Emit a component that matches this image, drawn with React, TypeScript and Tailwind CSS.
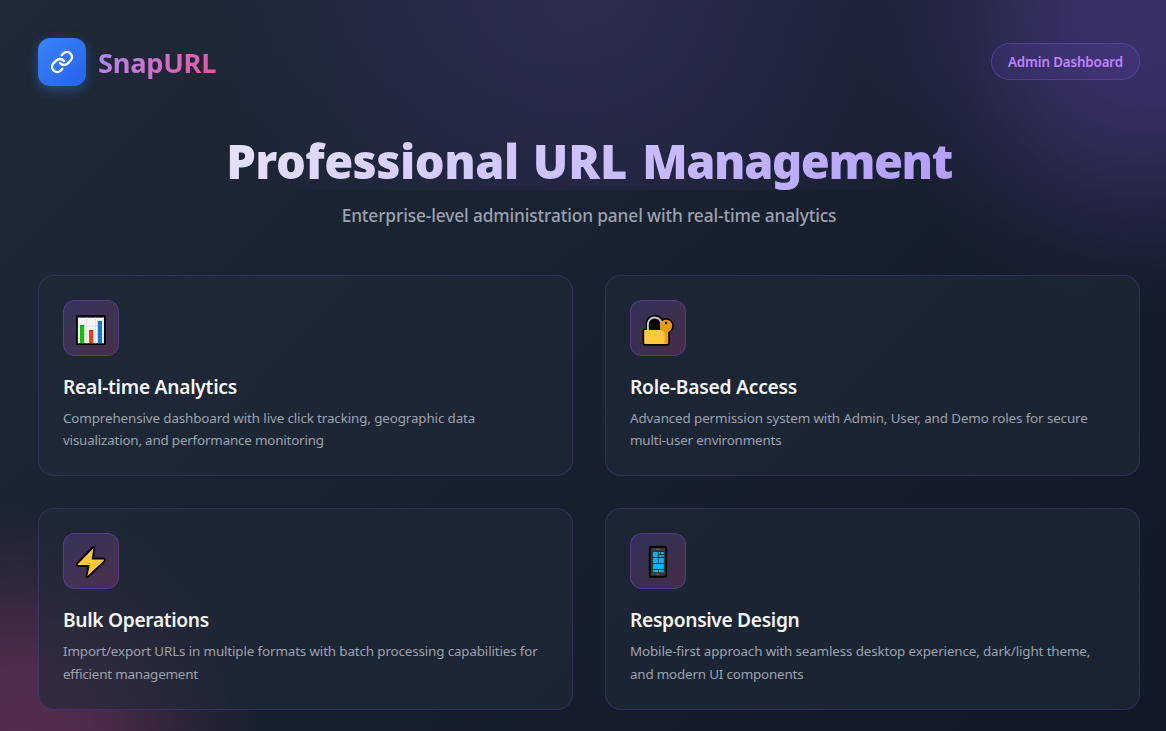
import type { ReactNode } from 'react';
import { Link } from 'lucide-react';

function ChartIcon() {
  return (
    <svg viewBox="0 0 56 56" className="size-full">
      <rect x="13" y="15.2" width="29.8" height="29.8" rx="0.8" fill="#050505" />
      <rect x="15" y="17.6" width="26" height="25.6" fill="#f3f3f3" />
      <path d="M15.3 17.6v25.6M23.7 17.6v25.6M32.5 17.6v25.6M40.5 17.6v25.6M15 26h26M15 34.4h26" stroke="#dedede" strokeWidth="0.8" />
      <rect x="17" y="25" width="4.2" height="18.2" fill="#16b916" />
      <rect x="26" y="30" width="4.2" height="13.2" fill="#f03a17" />
      <rect x="34.8" y="21" width="4.2" height="22.2" fill="#0f7bd8" />
      <path d="M17 25.4h4.2" stroke="#0c8f10" strokeWidth="0.8" />
      <path d="M26 30.4h4.2" stroke="#c92c0e" strokeWidth="0.8" />
      <path d="M34.8 21.4h4.2" stroke="#0b5ea8" strokeWidth="0.8" />
    </svg>
  );
}

function LockIcon() {
  return (
    <svg viewBox="0 0 56 56" className="size-full">
      <g fill="#050505">
        <rect x="12.5" y="28.6" width="27.4" height="17.2" rx="2" />
        <rect x="15.6" y="14.6" width="18.4" height="20" rx="9.2" />
        <circle cx="36" cy="26" r="7.9" />
      </g>
      <path d="M17.9 30.5v-6.3a6.8 6.8 0 0 1 13.6 0v6.3" fill="none" stroke="#c9c9c9" strokeWidth="2" />
      <rect x="14.2" y="30" width="23.6" height="14" rx="1" fill="#ffc83d" />
      <rect x="34.2" y="29" width="4" height="14.6" rx="0.8" fill="#e9a013" />
      <path d="M34.8 33v9" stroke="#ffc83d" strokeWidth="0.8" />
      <circle cx="36" cy="26" r="6.2" fill="#eb9d00" />
      <circle cx="36" cy="23" r="1.2" fill="#050505" />
    </svg>
  );
}

function BoltIcon() {
  return (
    <svg viewBox="0 0 56 56" className="size-full">
      <path
        d="M30.4 15.2 15.2 30.8c-.4.5-.1 1.1.5 1.1h11.1l-2.4 11.2 16.3-15.4c.5-.5.2-1.1-.4-1.1H28.7z"
        fill="#ffc83d" stroke="#050505" strokeWidth="4" strokeLinejoin="round" paintOrder="stroke"
      />
    </svg>
  );
}

function PhoneIcon() {
  return (
    <svg viewBox="0 0 56 56" className="size-full">
      <rect x="18.8" y="12.8" width="18.4" height="32" rx="2.2" fill="#050505" />
      <rect x="20.8" y="15" width="14.6" height="27.8" rx="0.8" fill="#3b3a39" />
      <path d="M26 16.3h4.4M26.7 41.4h2.2" stroke="#767676" strokeWidth="0.8" />
      <rect x="22.4" y="18.2" width="11.8" height="21.4" fill="#123243" />
      <g fill="#00b7f1">
        <rect x="22.9" y="19" width="5" height="5" />
        <rect x="28.8" y="19" width="1.6" height="2" />
        <rect x="31" y="19" width="2.8" height="2" />
        <rect x="28.8" y="22" width="2.8" height="2" />
        <rect x="32.2" y="22" width="1.6" height="2" />
        <rect x="22.9" y="25" width="5" height="5" />
        <rect x="28.8" y="25" width="5" height="5" />
        <rect x="22.9" y="31" width="10.9" height="5" />
        <rect x="22.9" y="37" width="5" height="2.2" />
        <rect x="28.8" y="37" width="5" height="2.2" />
      </g>
    </svg>
  );
}

type Line = { text: string; tracking: string };
type Feature = { icon: ReactNode; title: Line; lines: Line[] };

const features: Feature[] = [
  {
    icon: <ChartIcon />,
    title: { text: 'Real-time Analytics', tracking: 'tracking-[-0.26px]' },
    lines: [
      { text: 'Comprehensive dashboard with live click tracking, geographic data', tracking: 'tracking-[-0.12px]' },
      { text: 'visualization, and performance monitoring', tracking: 'tracking-[-0.187px]' },
    ],
  },
  {
    icon: <LockIcon />,
    title: { text: 'Role-Based Access', tracking: 'tracking-[-0.22px]' },
    lines: [
      { text: 'Advanced permission system with Admin, User, and Demo roles for secure', tracking: 'tracking-[-0.117px]' },
      { text: 'multi-user environments', tracking: 'tracking-[-0.175px]' },
    ],
  },
  {
    icon: <BoltIcon />,
    title: { text: 'Bulk Operations', tracking: 'tracking-[-0.33px]' },
    lines: [
      { text: 'Import/export URLs in multiple formats with batch processing capabilities for', tracking: 'tracking-[-0.137px]' },
      { text: 'efficient management', tracking: 'tracking-[-0.21px]' },
    ],
  },
  {
    icon: <PhoneIcon />,
    title: { text: 'Responsive Design', tracking: 'tracking-[-0.33px]' },
    lines: [
      { text: 'Mobile-first approach with seamless desktop experience, dark/light theme,', tracking: 'tracking-[-0.135px]' },
      { text: 'and modern UI components', tracking: 'tracking-[-0.18px]' },
    ],
  },
];

function FeatureCard({ icon, title, lines }: Feature) {
  return (
    <article className="h-[201.4px] rounded-2xl border border-[#8b5cf6]/20 bg-[#1f2937]/60 p-6">
      <div className="size-14 rounded-xl border border-[#8b5cf6]/30 bg-linear-135 from-[#8b5cf6]/20 to-[#ec4899]/20">
        <div className="-m-px size-14">{icon}</div>
      </div>
      <h3 className={`mt-[18px] text-[19.2px] leading-[26px] font-semibold text-[#f3f4f6] ${title.tracking}`}>{title.text}</h3>
      <p className="mt-[7px] text-[13.4px] leading-[22.4px] text-[#9ca3af]">
        {lines.map((line) => (
          <span key={line.text} className={`block whitespace-nowrap ${line.tracking}`}>{line.text}</span>
        ))}
      </p>
    </article>
  );
}

export default function App() {
  return (
    <div className="relative isolate h-screen overflow-hidden bg-linear-135 from-[#1f2937] to-[#111827] font-['Noto_Sans',sans-serif]">
      <div className="absolute inset-x-0 top-0 -z-10 h-[190px] bg-[radial-gradient(circle_390px_at_589px_-10px,rgba(139,92,246,0.16),transparent)]" />
      <div className="absolute inset-0 -z-10 bg-[radial-gradient(circle_290px_at_1145px_25px,rgba(139,92,246,0.29),rgba(139,92,246,0.27)_25%,rgba(139,92,246,0.2)_45%,rgba(139,92,246,0.1)_66%,rgba(139,92,246,0.03)_85%,transparent)]" />
      <div className="absolute inset-0 -z-10 bg-[radial-gradient(circle_240px_at_20px_740px,rgba(236,72,153,0.28),rgba(236,72,153,0.25)_30%,rgba(236,72,153,0.16)_52%,rgba(236,72,153,0.07)_74%,rgba(236,72,153,0.02)_90%,transparent)]" />

      <div className="flex flex-col pt-[38px] pr-[26px] pl-[38px]">
        <header className="flex h-12 items-center justify-between">
          <div className="flex items-center gap-3">
            <div className="flex size-12 items-center justify-center rounded-xl bg-linear-135 from-[#3b82f6] to-[#2563eb] shadow-[0_4px_12px_rgba(59,130,246,0.4)]">
              <Link className="size-6 text-white" strokeWidth={2.4} />
            </div>
            <span className="mt-0.5 bg-linear-135 from-[#a78bfa] to-[#ec4899] bg-clip-text text-[27.3px] leading-10 font-bold tracking-[-0.3px] text-transparent">SnapURL</span>
          </div>
          <div className="mb-px flex h-[37px] w-[149px] items-center justify-center rounded-full border border-[#8b5cf6]/35 bg-[#8b5cf6]/10 pt-px text-[13.4px] font-semibold tracking-[-0.155px] text-[#c084fc]">
            Admin Dashboard
          </div>
        </header>

        <section className="flex flex-col items-center pt-[46px]">
          <h1 className="w-full bg-linear-135 from-[#f3f4f6] to-[#a78bfa] bg-clip-text text-center text-[47px] leading-[58px] font-black whitespace-nowrap text-transparent">
            <span className="tracking-[-0.55px]">Professional </span>
            <span className="mx-[2.5px] tracking-[0px]">URL </span>
            <span className="tracking-[-1.43px]">Management</span>
          </h1>
          <p className="mt-3 text-[17.3px] leading-7 font-medium tracking-[-0.12px] text-[#9ca3af]">
            Enterprise-level administration panel with real-time analytics
          </p>
        </section>

        <main className="mt-[45px] grid grid-cols-2 gap-8">
          {features.map((feature) => (
            <FeatureCard key={feature.title.text} {...feature} />
          ))}
        </main>
      </div>
    </div>
  );
}
